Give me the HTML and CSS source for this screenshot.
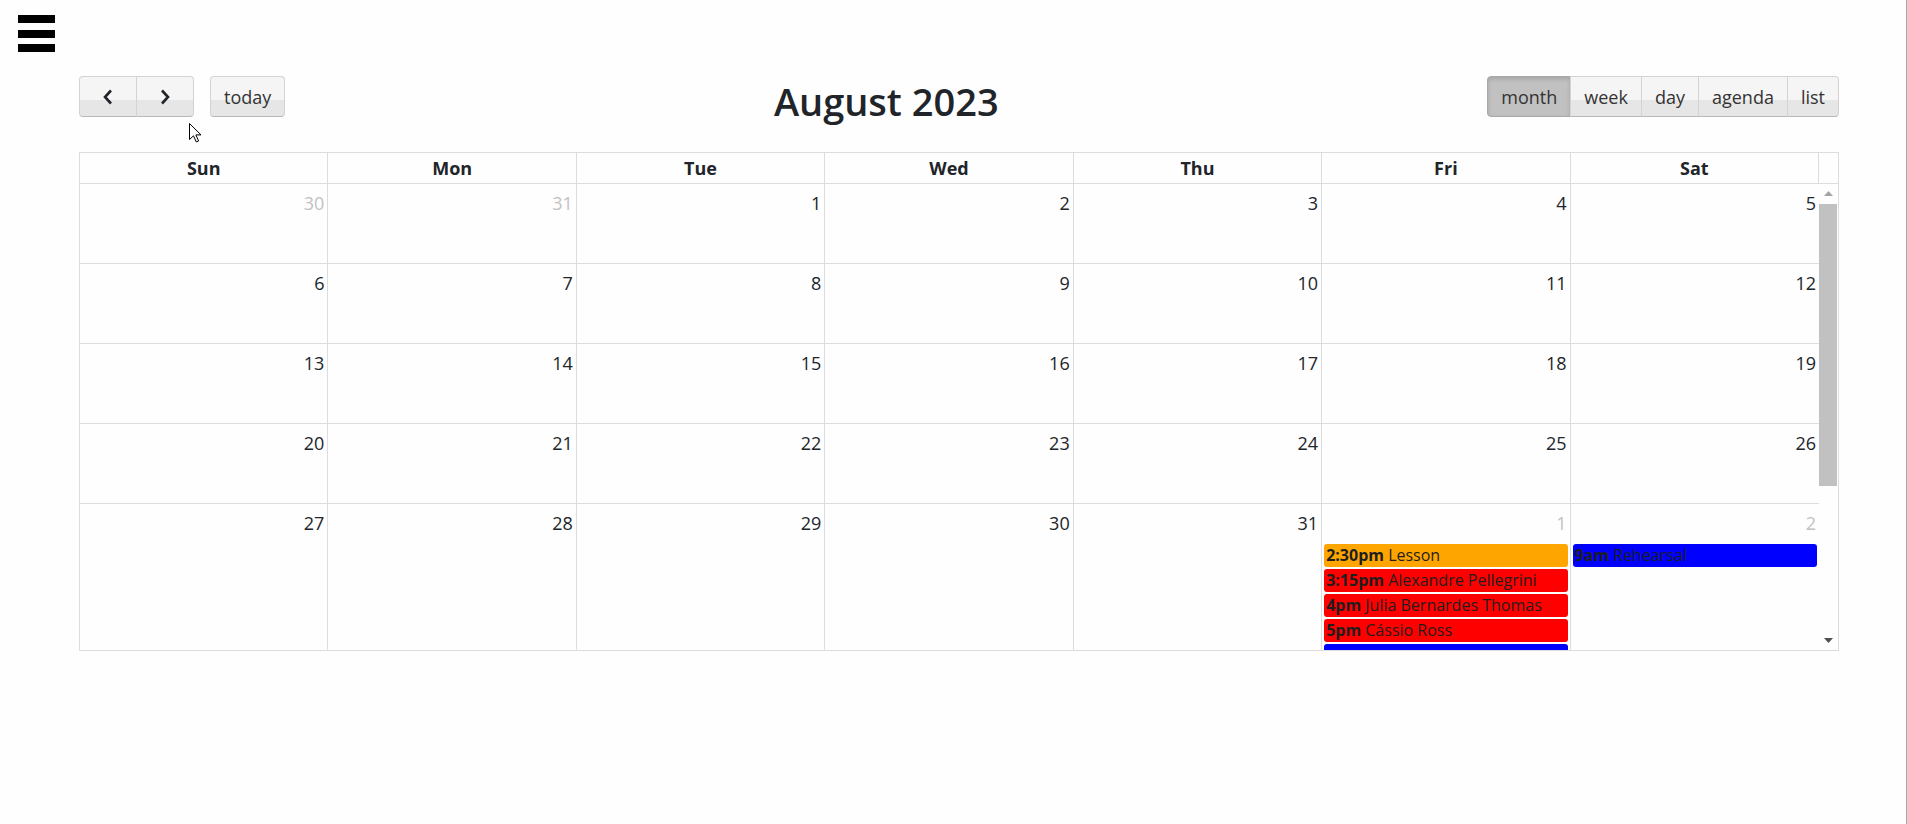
FILE: index.html
```html
<!DOCTYPE html>
<html>
<head>
<title>calendar</title>
<meta http-equiv="Content-Type" content="text/html; charset=utf-8" />
<link rel="stylesheet" href="styles.css">
</head>
<body>
<div class="page">
	<div class="menu-icon"><span></span><span></span><span></span></div>

	<div class="calendar">
		<div class="toolbar">
			<div class="tb-left">
				<div class="btn-group">
					<button class="btn btn-icon"><svg width="12" height="16" viewBox="0 0 12 16"><polyline points="9,1.5 3,8 9,14.5" fill="none" stroke="#212529" stroke-width="2.6"/></svg></button>
					<button class="btn btn-icon"><svg width="12" height="16" viewBox="0 0 12 16"><polyline points="3,1.5 9,8 3,14.5" fill="none" stroke="#212529" stroke-width="2.6"/></svg></button>
				</div>
				<button class="btn">today</button>
			</div>
			<div class="tb-center"><h2 class="title">August 2023</h2></div>
			<div class="tb-right">
				<div class="btn-group">
					<button class="btn active">month</button>
					<button class="btn">week</button>
					<button class="btn">day</button>
					<button class="btn">agenda</button>
					<button class="btn">list</button>
				</div>
			</div>
		</div>

		<div class="view">
			<div class="head">
				<div class="head-row">
					<div class="head-cell">Sun</div>
					<div class="head-cell">Mon</div>
					<div class="head-cell">Tue</div>
					<div class="head-cell">Wed</div>
					<div class="head-cell">Thu</div>
					<div class="head-cell">Fri</div>
					<div class="head-cell">Sat</div>
				</div>
				<div class="gutter"></div>
			</div>
			<div class="body">
				<div class="weeks">
					<div class="week">
						<div class="day other"><div class="num">30</div></div>
						<div class="day other"><div class="num">31</div></div>
						<div class="day"><div class="num">1</div></div>
						<div class="day"><div class="num">2</div></div>
						<div class="day"><div class="num">3</div></div>
						<div class="day"><div class="num">4</div></div>
						<div class="day"><div class="num">5</div></div>
					</div>
					<div class="week">
						<div class="day"><div class="num">6</div></div>
						<div class="day"><div class="num">7</div></div>
						<div class="day"><div class="num">8</div></div>
						<div class="day"><div class="num">9</div></div>
						<div class="day"><div class="num">10</div></div>
						<div class="day"><div class="num">11</div></div>
						<div class="day"><div class="num">12</div></div>
					</div>
					<div class="week">
						<div class="day"><div class="num">13</div></div>
						<div class="day"><div class="num">14</div></div>
						<div class="day"><div class="num">15</div></div>
						<div class="day"><div class="num">16</div></div>
						<div class="day"><div class="num">17</div></div>
						<div class="day"><div class="num">18</div></div>
						<div class="day"><div class="num">19</div></div>
					</div>
					<div class="week">
						<div class="day"><div class="num">20</div></div>
						<div class="day"><div class="num">21</div></div>
						<div class="day"><div class="num">22</div></div>
						<div class="day"><div class="num">23</div></div>
						<div class="day"><div class="num">24</div></div>
						<div class="day"><div class="num">25</div></div>
						<div class="day"><div class="num">26</div></div>
					</div>
					<div class="week">
						<div class="day"><div class="num">27</div></div>
						<div class="day"><div class="num">28</div></div>
						<div class="day"><div class="num">29</div></div>
						<div class="day"><div class="num">30</div></div>
						<div class="day"><div class="num">31</div></div>
						<div class="day other">
							<div class="num">1</div>
							<div class="ev orange"><b>2:30pm</b> Lesson</div>
							<div class="ev red"><b>3:15pm</b> Alexandre Pellegrini</div>
							<div class="ev red"><b>4pm</b> Julia Bernardes Thomas</div>
							<div class="ev red"><b>5pm</b> Cássio Ross</div>
							<div class="ev blue"></div>
						</div>
						<div class="day other">
							<div class="num">2</div>
							<div class="ev blue"><b>9am</b> Rehearsal</div>
						</div>
					</div>
				</div>
				<div class="scrollbar">
					<div class="sb-btn"><svg width="9" height="5" viewBox="0 0 9 5"><path d="M0 5L4.5 0L9 5Z" fill="#a3a3a3"/></svg></div>
					<div class="sb-track"><div class="sb-thumb"></div></div>
					<div class="sb-btn"><svg width="9" height="5" viewBox="0 0 9 5"><path d="M0 0L9 0L4.5 5Z" fill="#505050"/></svg></div>
				</div>
			</div>
		</div>
	</div>

	<svg class="cursor" width="13" height="20" viewBox="0 0 13 20"><path d="M0.5 0.5 L0.5 16.5 L4.5 12.8 L7.3 19 L9.6 18 L6.9 11.9 L12 11.9 Z" fill="#fff" stroke="#000" stroke-width="1"/></svg>
</div>
</body>
</html>
```

FILE: styles.css
```css
* {box-sizing:border-box;}
html, body {margin:0;padding:0;}
body {background:#fefefe;color:#212529;font-family:"Open Sans","Noto Sans",sans-serif;font-size:18px;}

.page {position:relative;width:1907px;min-height:100vh;border-right:1px solid #a8a8a8;overflow:hidden;}

/* menu */
.menu-icon {display:flex;flex-direction:column;gap:6.5px;width:37px;margin:15px 0 0 18px;}
.menu-icon span {display:block;height:8px;background:#000;}

.calendar {width:1760px;margin:24px 0 0 79px;}

/* toolbar */
.toolbar {display:flex;align-items:center;height:41px;margin-bottom:35px;}
.tb-left {display:flex;gap:16px;}
.tb-center {flex:1;align-self:flex-start;text-align:center;}
.title {margin:0;padding-top:5px;font-size:38px;font-weight:600;line-height:41px;}

.btn-group {display:flex;}
.btn {height:41px;padding:0 13px;font-family:inherit;font-size:18px;color:#333;background:linear-gradient(#f5f5f5 58%,#e6e6e6 58%);border:1px solid #d3d3d3;border-bottom-color:#b9b9b9;border-radius:4px;}
.btn-group .btn {border-radius:0;}
.btn-group .btn + .btn {margin-left:-1px;}
.btn-group .btn:first-child {border-radius:4px 0 0 4px;}
.btn-group .btn:last-child {border-radius:0 4px 4px 0;}
.btn-icon {width:58px;padding:0;display:flex;align-items:center;justify-content:center;}
.btn.active {background:#c1c1c1;border-color:#a9a9a9;box-shadow:inset 0 2px 4px rgba(0,0,0,.15);}

/* month view */
.view {border:1px solid #ddd;}
.head {display:flex;border-bottom:1px solid #ddd;}
.head-row {flex:1;display:grid;grid-template-columns:repeat(7,1fr);}
.head-cell {height:30px;line-height:30px;text-align:center;font-weight:700;border-right:1px solid #ddd;}
.gutter {width:19px;}

.body {display:flex;height:466px;}
.weeks {flex:1;overflow:hidden;}

.scrollbar {display:flex;flex-direction:column;width:19px;}
.sb-btn {display:flex;align-items:center;justify-content:center;height:19px;padding-right:1px;}
.sb-track {flex:1;}
.sb-thumb {height:282px;margin:1px 1px 0 0;background:#c1c1c1;}

.week {display:grid;grid-template-columns:repeat(7,1fr);min-height:80px;border-bottom:1px solid #ddd;}
.day {border-right:1px solid #ddd;padding-bottom:4px;}
.day:last-child {border-right:0;}
.num {height:40px;padding:7px 3px 0;text-align:right;line-height:25px;}
.other .num {color:#c2c2c2;}

.ev {height:23px;margin:0 2px 2px;padding:0 2px;border-radius:3px;font-size:16px;line-height:23px;white-space:nowrap;overflow:hidden;color:#1e1e1e;}
.ev b {font-weight:700;}
.ev.orange {background:#ffa500;}
.ev.red {background:#ff0000;}
.ev.blue {background:#0000ff;}

.cursor {position:absolute;left:189px;top:123px;}
```
